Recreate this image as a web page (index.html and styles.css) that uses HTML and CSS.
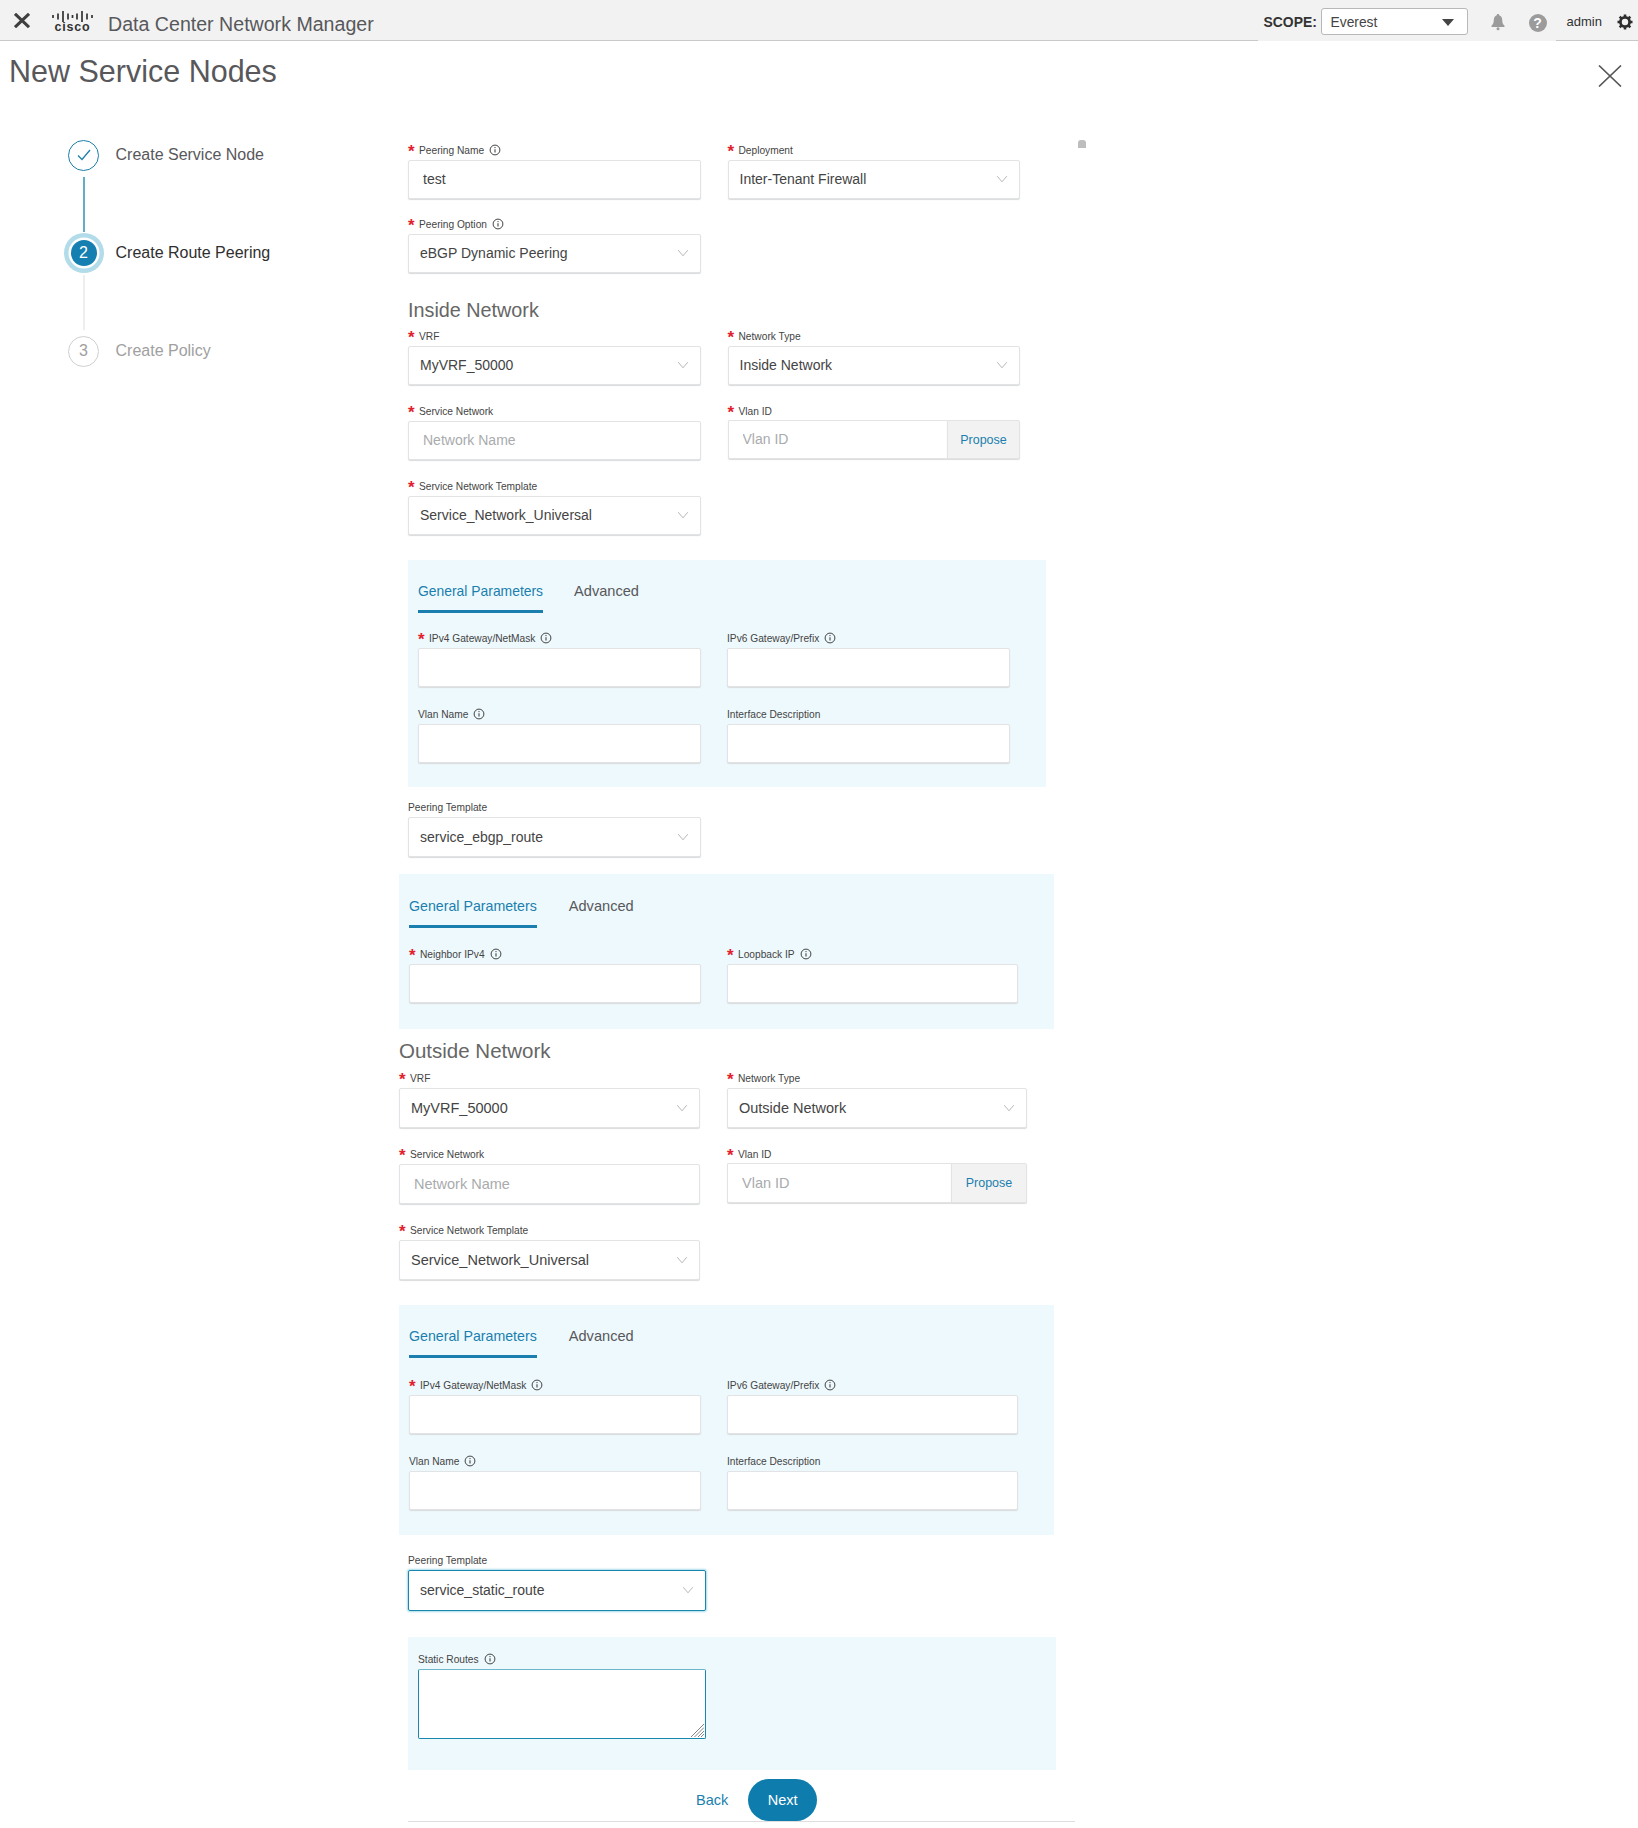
FILE: index.html
```html
<!DOCTYPE html>
<html lang="en">
<head>
  <meta charset="UTF-8" />
  <title>New Service Nodes</title>
  <link rel="stylesheet" href="styles.css">
</head>
<body>
  <svg class="sprites" width="0" height="0">
    <symbol id="i-info" viewBox="0 0 12 12">
      <circle cx="6" cy="6" r="4.9" fill="none" stroke="#444" stroke-width="1"/>
      <path d="M6 5.2v3.4" stroke="#444" stroke-width="1.1"/>
      <circle cx="6" cy="3.6" r=".7" fill="#444"/>
    </symbol>
    <symbol id="i-chev" viewBox="0 0 12 8">
      <path d="M1.2 1.2 6 6.8l4.8-5.6" fill="none" stroke="#b5b8ba" stroke-width="1"/>
    </symbol>
  </svg>

  <header class="topbar">
    <svg class="menu-x" viewBox="0 0 16 15"><path d="M1 .8 15 14.2M15 .8 1 14.2" stroke="#3f3f3f" stroke-width="3"/></svg>
    <div class="logo">
      <svg class="logo-bars" viewBox="0 0 41 12">
        <path d="M1 5v3M6 3.500v6M11 1v11M16 3.500v6M20.500 5v3M25 3.500v6M30 1v11M35 3.500v6M40 5v3" stroke="#333" stroke-width="1.700" fill="none"/>
      </svg>
      <span class="logo-word">cisco</span>
    </div>
    <div class="app-name">Data Center Network Manager</div>
    <div class="scope">
      <b class="scope-label">SCOPE:</b>
      <div class="scope-select">Everest<span class="caret"></span></div>
      <svg class="bell" viewBox="0 0 16 18">
        <path d="M8 1c-.8 0-1.200.5-1.200 1.200C4.800 2.800 3.800 4.500 3.800 7c0 3-.9 4.600-2.300 5.800V14h13v-1.200C13.100 11.600 12.200 10 12.200 7c0-2.500-1-4.200-3-4.800C9.200 1.500 8.800 1 8 1z" fill="#9b9b9b"/>
        <circle cx="8" cy="15.700" r="1.500" fill="#9b9b9b"/>
      </svg>
      <span class="help">?</span>
    </div>
    <span class="user">admin</span>
    <svg class="gear" viewBox="0 0 16 16">
      <circle cx="8" cy="8" r="4.600" fill="none" stroke="#2e2e2e" stroke-width="2.800"/>
      <path d="M8 .5v3M8 12.500v3M.5 8h3M12.500 8h3M2.700 2.700l2.100 2.100M11.200 11.200l2.100 2.100M13.300 2.700l-2.100 2.100M4.800 11.200l-2.100 2.100" stroke="#2e2e2e" stroke-width="2.600"/>
    </svg>
  </header>

  <div class="title-row">
    <h1>New Service Nodes</h1>
    <svg class="close-x" viewBox="0 0 24 22"><path d="M1 .5 23 21.500M23 .5 1 21.500" stroke="#555" stroke-width="1.600"/></svg>
  </div>

  <div class="wizard">
    <div class="steps">
      <div class="step done">
        <span class="dot">
          <svg viewBox="0 0 14 12" width="14" height="12"><path d="M1 6.500 5 10.500 13 1" fill="none" stroke="#1b7fa8" stroke-width="1.300"/></svg>
        </span>
        Create Service Node
      </div>
      <div class="link link-on"></div>
      <div class="step active"><span class="dot">2</span>Create Route Peering</div>
      <div class="link"></div>
      <div class="step todo"><span class="dot">3</span>Create Policy</div>
    </div>

    <form class="form">
      <span class="corner-mark"></span>

      <div class="indent">
        <div class="cols cols-top cols-first">
          <div class="field">
            <label><i>*</i>Peering Name<svg class="info"><use href="#i-info"/></svg></label>
            <input type="text" value="test" />
          </div>
          <div class="field">
            <label><i>*</i>Deployment</label>
            <div class="select">Inter-Tenant Firewall<svg class="chev"><use href="#i-chev"/></svg></div>
          </div>
          <div class="field">
            <label><i>*</i>Peering Option<svg class="info"><use href="#i-info"/></svg></label>
            <div class="select">eBGP Dynamic Peering<svg class="chev"><use href="#i-chev"/></svg></div>
          </div>
        </div>

        <h2 class="net-title">Inside Network</h2>
        <div class="cols cols-top">
          <div class="field">
            <label><i>*</i>VRF</label>
            <div class="select">MyVRF_50000<svg class="chev"><use href="#i-chev"/></svg></div>
          </div>
          <div class="field">
            <label><i>*</i>Network Type</label>
            <div class="select">Inside Network<svg class="chev"><use href="#i-chev"/></svg></div>
          </div>
          <div class="field">
            <label><i>*</i>Service Network</label>
            <input type="text" placeholder="Network Name" />
          </div>
          <div class="field">
            <label><i>*</i>Vlan ID</label>
            <div class="input-group">
              <input type="text" placeholder="Vlan ID" />
              <button type="button" class="propose">Propose</button>
            </div>
          </div>
          <div class="field">
            <label><i>*</i>Service Network Template</label>
            <div class="select">Service_Network_Universal<svg class="chev"><use href="#i-chev"/></svg></div>
          </div>
        </div>

        <div class="panel panel-a">
          <div class="tabs tabs-a">
            <span class="tab on">General Parameters</span>
            <span class="tab">Advanced</span>
          </div>
          <div class="cols cols-a">
            <div class="field">
              <label><i>*</i>IPv4 Gateway/NetMask<svg class="info"><use href="#i-info"/></svg></label>
              <input type="text" />
            </div>
            <div class="field">
              <label>IPv6 Gateway/Prefix<svg class="info"><use href="#i-info"/></svg></label>
              <input type="text" />
            </div>
            <div class="field">
              <label>Vlan Name<svg class="info"><use href="#i-info"/></svg></label>
              <input type="text" />
            </div>
            <div class="field">
              <label>Interface Description</label>
              <input type="text" />
            </div>
          </div>
        </div>

        <div class="field template-one">
          <label>Peering Template</label>
          <div class="select">service_ebgp_route<svg class="chev"><use href="#i-chev"/></svg></div>
        </div>
      </div>

      <div class="panel panel-b">
        <div class="tabs">
          <span class="tab on">General Parameters</span>
          <span class="tab">Advanced</span>
        </div>
        <div class="cols cols-b">
          <div class="field">
            <label><i>*</i>Neighbor IPv4<svg class="info"><use href="#i-info"/></svg></label>
            <input type="text" />
          </div>
          <div class="field">
            <label><i>*</i>Loopback IP<svg class="info"><use href="#i-info"/></svg></label>
            <input type="text" />
          </div>
        </div>
      </div>

      <div class="outside">
        <h2 class="net-title">Outside Network</h2>
        <div class="cols cols-out">
          <div class="field">
            <label><i>*</i>VRF</label>
            <div class="select">MyVRF_50000<svg class="chev"><use href="#i-chev"/></svg></div>
          </div>
          <div class="field">
            <label><i>*</i>Network Type</label>
            <div class="select">Outside Network<svg class="chev"><use href="#i-chev"/></svg></div>
          </div>
          <div class="field">
            <label><i>*</i>Service Network</label>
            <input type="text" placeholder="Network Name" />
          </div>
          <div class="field">
            <label><i>*</i>Vlan ID</label>
            <div class="input-group wide-btn">
              <input type="text" placeholder="Vlan ID" />
              <button type="button" class="propose">Propose</button>
            </div>
          </div>
          <div class="field">
            <label><i>*</i>Service Network Template</label>
            <div class="select">Service_Network_Universal<svg class="chev"><use href="#i-chev"/></svg></div>
          </div>
        </div>
      </div>

      <div class="panel panel-c">
        <div class="tabs">
          <span class="tab on">General Parameters</span>
          <span class="tab">Advanced</span>
        </div>
        <div class="cols cols-b">
          <div class="field">
            <label><i>*</i>IPv4 Gateway/NetMask<svg class="info"><use href="#i-info"/></svg></label>
            <input type="text" />
          </div>
          <div class="field">
            <label>IPv6 Gateway/Prefix<svg class="info"><use href="#i-info"/></svg></label>
            <input type="text" />
          </div>
          <div class="field">
            <label>Vlan Name<svg class="info"><use href="#i-info"/></svg></label>
            <input type="text" />
          </div>
          <div class="field">
            <label>Interface Description</label>
            <input type="text" />
          </div>
        </div>
      </div>

      <div class="indent">
        <div class="field template-two">
          <label>Peering Template</label>
          <div class="select focus">service_static_route<svg class="chev"><use href="#i-chev"/></svg></div>
        </div>

        <div class="panel panel-d">
          <div class="field">
            <label>Static Routes<svg class="info"><use href="#i-info"/></svg></label>
            <div class="area-wrap">
              <textarea></textarea>
              <svg class="grip" viewBox="0 0 13 13"><path d="M13 0 0 13M13 3.500 3.500 13M13 7 7 13M13 10 10 13" stroke="#777" stroke-width=".9"/></svg>
            </div>
          </div>
        </div>

        <div class="wizard-foot">
          <a class="back">Back</a>
          <button type="button" class="next">Next</button>
        </div>
      </div>
    </form>
  </div>
</body>
</html>
```

FILE: styles.css
```css
* { box-sizing: border-box; }
html, body { height: 100%; }
body {
  margin: 0;
  background: #fff;
  font-family: "Liberation Sans", Arial, sans-serif;
  color: #58585b;
  overflow: hidden;
}
.sprites { position: absolute; }

/* top bar */
.topbar {
  display: flex;
  align-items: center;
  height: 41px;
  padding-right: 5px;
  background: #f2f2f2;
  border-bottom: 1px solid #c9c9c9;
}
.menu-x { width: 16px; height: 15px; margin-left: 14px; }
.logo {
  display: flex;
  flex-direction: column;
  align-items: center;
  width: 41px;
  margin-left: 22px;
  margin-top: 3px;
}
.logo-bars { width: 41px; height: 12px; display: block; }
.logo-word {
  font-size: 12.500px;
  line-height: 11px;
  font-weight: bold;
  letter-spacing: .8px;
  color: #333;
}
.app-name { margin-left: 15px; margin-top: 9px; font-size: 19.600px; color: #58585b; }
.scope {
  display: flex;
  align-items: center;
  height: 41px;
  margin-left: auto;
  margin-bottom: -1px;
  padding: 2px 0 0 6px;
  width: 298px;
  background: #f2f2f2;
}
.scope-label { font-size: 13.900px; color: #333; width: 57px; }
.scope-select {
  position: relative;
  width: 147px;
  height: 27px;
  padding-left: 9px;
  line-height: 27px;
  font-size: 13.800px;
  color: #444;
  background: #fff;
  border: 1px solid #b8b8b8;
  border-radius: 3px;
}
.caret {
  position: absolute;
  right: 13px;
  top: 10px;
  border-left: 6px solid transparent;
  border-right: 6px solid transparent;
  border-top: 7px solid #444;
}
.bell { width: 16px; height: 18px; margin-left: 22px; }
.help {
  width: 18px;
  height: 18px;
  margin-left: 23px;
  margin-top: 3px;
  border-radius: 50%;
  background: #9b9b9b;
  color: #fff;
  font-size: 14px;
  font-weight: bold;
  line-height: 18px;
  text-align: center;
}
.user { margin-left: 11px; font-size: 13px; color: #333; margin-top: 3px; }
.gear { width: 16px; height: 16px; margin-left: 15px; margin-top: 3px; }

/* title */
.title-row {
  display: flex;
  justify-content: space-between;
  align-items: flex-start;
  padding: 12px 16px 0 9px;
}
h1 {
  margin: 0;
  font-size: 30.500px;
  line-height: 36px;
  font-weight: normal;
  color: #58585b;
}
.close-x { width: 24px; height: 22px; margin-top: 12px; }

.wizard { display: flex; padding-top: 41px; padding-left: 63.500px; }

/* stepper */
.steps { width: 335.500px; padding-top: 5px; }
.step {
  display: flex;
  align-items: center;
  height: 40px;
  font-size: 16px;
  gap: 12px;
}
.dot {
  display: flex;
  align-items: center;
  justify-content: center;
  flex: none;
  width: 31px;
  height: 31px;
  margin: 0 4.500px;
  border-radius: 50%;
  font-size: 16px;
}
.step.done .dot { border: 1.500px solid #1b7fa8; }
.step.active { color: #2f2f2f; }
.step.active .dot {
  width: 26px;
  height: 26px;
  margin: 0 7px;
  background: #147fb0;
  color: #fff;
  box-shadow: 0 0 0 2.500px #fff, 0 0 0 7px #b3dcea;
}
.step.todo { color: #a0a0a0; }
.step.todo .dot { border: 1px solid #cfcfcf; }
.link { width: 2px; height: 55px; margin: 1.500px 0 1.500px 19px; background: #eeeeee; }
.link-on { background: #62aec4; }

/* form */
.form { position: relative; width: 680px; padding-top: 10px; }
.corner-mark {
  position: absolute;
  left: 679px;
  top: 10px;
  width: 8px;
  height: 8px;
  border-radius: 3px 3px 0 0;
  background: #bdbdbd;
}
.indent { margin-left: 9px; }
.cols { display: grid; row-gap: 16px; }
.cols-top { grid-template-columns: 293px 292.500px; column-gap: 26.500px; }
.cols-first { row-gap: 15px; }
.cols-a { grid-template-columns: 283px 283px; column-gap: 26px; row-gap: 17px; margin-top: 15px; }
.cols-b { grid-template-columns: 292px 291px; column-gap: 26px; row-gap: 17px; margin-top: 16px; }
.cols-out { grid-template-columns: 301px 300px; column-gap: 27px; }

.field label {
  display: flex;
  align-items: center;
  height: 20px;
  font-size: 10.200px;
  color: #444;
  white-space: nowrap;
}
.field label i {
  width: 11px;
  height: 20px;
  margin-top: 4px;
  line-height: 20px;
  color: #e2202c;
  font-size: 17px;
  font-style: normal;
  font-weight: bold;
}
.info { width: 12px; height: 12px; margin-left: 5px; }

.field input,
.select {
  display: flex;
  align-items: center;
  justify-content: space-between;
  width: 100%;
  height: 39px;
  padding: 0 11px 1px;
  font-family: inherit;
  font-size: 14px;
  color: #444;
  background: #fff;
  border: 1px solid #e1e3e4;
  border-radius: 2px;
  box-shadow: 0 1px 1px #d9dbdc;
  outline: none;
}
.field input { padding-left: 14px; }
.field input::placeholder { color: #a9abad; opacity: 1; }
.chev { width: 12px; height: 8px; flex: none; }

.input-group { display: flex; margin-top: -1px; }
.input-group input { flex: 1; min-width: 0; border-right: none; border-radius: 2px 0 0 2px; }
.propose {
  flex: none;
  width: 73px;
  height: 39px;
  font-family: inherit;
  font-size: 12.500px;
  color: #1a7fae;
  background: #f2f2f2;
  border: 1px solid #e1e3e4;
  border-radius: 0 2px 2px 0;
  box-shadow: 0 1px 1px #d9dbdc;
}
.wide-btn .propose { width: 76px; height: 40px; }
.wide-btn input { height: 40px; }

.net-title {
  margin: 0;
  font-size: 19.800px;
  line-height: 28px;
  font-weight: normal;
  color: #666;
}
.cols-top + .net-title { margin: 23px 0 2px; }

/* tinted panels */
.panel { background: #eef9fd; padding: 22px 10px 25px; }
.panel-a { width: 638px; margin-top: 25px; padding-bottom: 24px; }
.panel-b { width: 655px; margin-top: 17px; padding-top: 23px; padding-bottom: 26px; }
.panel-c { width: 655px; margin-top: 25px; }
.panel-c .cols-b { margin-top: 17px; }
.panel-d { width: 648px; margin-top: 26px; padding: 12px 10px 31px; }

.tabs { display: flex; gap: 32px; font-size: 14.200px; }
.tabs-a { gap: 31px; font-size: 13.900px; }
.tab {
  line-height: 18px;
  padding-bottom: 10px;
  border-bottom: 3px solid transparent;
  color: #58585b;
}
.tab:last-child { font-size: 14.600px; }
.tab.on { color: #1a7fae; border-bottom-color: #1a7fae; }

.template-one { width: 293px; margin-top: 11px; }
.template-one label { height: 19px; }
.template-one .select { height: 40px; }
.outside { margin-top: 8px; }
.outside .net-title { font-size: 20.500px; margin-bottom: 3px; }
.outside .select,
.outside .field input { height: 40px; font-size: 14.500px; }
.outside .wide-btn { margin-top: -1px; }
.template-two { width: 297.500px; margin-top: 15px; }

.select.focus {
  height: 41px;
  border: 1px solid #1a86ad;
  box-shadow: 0 0 2px 1px #a6dbe9;
}
.area-wrap { position: relative; width: 288px; }
textarea {
  display: block;
  width: 288px;
  height: 70px;
  border: 1px solid #1a86ad;
  border-top-color: #6db6cc;
  border-radius: 2px;
  background: #fff;
  outline: none;
  resize: none;
}
.grip { position: absolute; right: 2px; bottom: 2px; width: 13px; height: 13px; }

/* wizard buttons */
.wizard-foot {
  display: flex;
  align-items: flex-start;
  gap: 20px;
  width: 667px;
  height: 43px;
  margin-top: 9px;
  padding-left: 288px;
  border-bottom: 1px solid #dedede;
}
.back { font-size: 14.500px; line-height: 42px; color: #1a7fae; }
.next {
  width: 69px;
  height: 42px;
  border: none;
  border-radius: 21px;
  background: #0f7cae;
  color: #fff;
  font-family: inherit;
  font-size: 14.500px;
}
```
